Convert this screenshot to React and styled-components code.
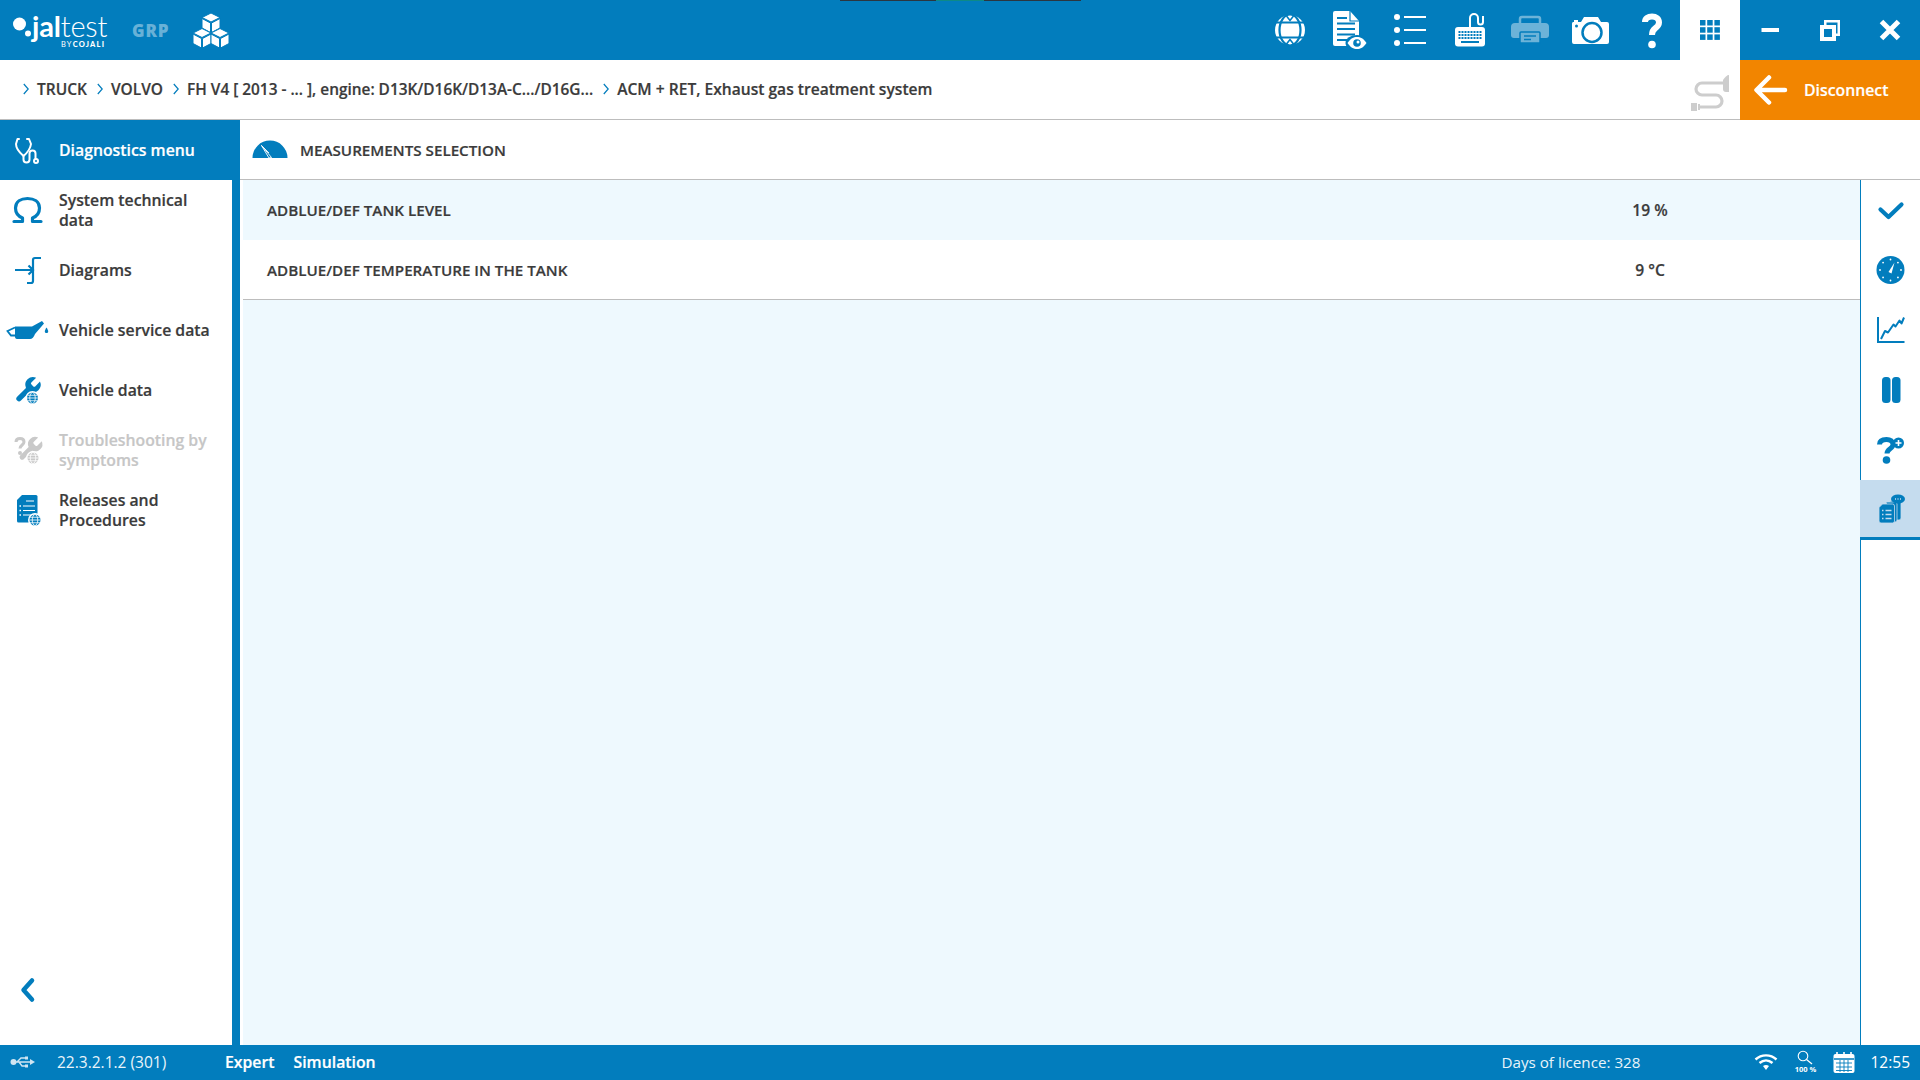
import React from "react";
import styled, { createGlobalStyle } from "styled-components";

const BLUE = "#027dbd";
const TEXT = "#3b3b3b";

const Global = createGlobalStyle`
  html, body { margin: 0; padding: 0; height: 100%; background: #fff; }
  #root { height: 100%; }
  * { box-sizing: border-box; }
  body { font-family: "Open Sans", "Liberation Sans", sans-serif; color: ${TEXT}; overflow: hidden; }
`;

const Page = styled.div`
  position: relative;
  width: 1920px;
  height: 1080px;
  display: flex;
  flex-direction: column;
`;
const TopStrip = styled.div`
  position: absolute;
  top: 0;
  left: 840px;
  width: 241px;
  height: 1px;
  background: linear-gradient(to right, #2b3640 0 96px, #0e8a86 96px 144px, #2b3640 144px);
`;
const Header = styled.header`
  height: 60px;
  flex: none;
  background: ${BLUE};
  display: flex;
  align-items: center;
`;
const Logo = styled.div`
  display: flex;
  align-items: flex-start;
  width: 132px;
  padding-left: 13px;
  color: #fff;
`;
const LogoText = styled.div`
  display: flex;
  flex-direction: column;
  align-items: flex-end;
`;
const Wordmark = styled.div`
  font-family: Lato, sans-serif;
  font-size: 29px;
  line-height: 29px;
  font-weight: 300;
  letter-spacing: -0.2px;
  height: 29px;
  b { font-weight: 700; }
`;
const Byline = styled.div`
  font-family: Lato, sans-serif;
  font-size: 7.5px;
  line-height: 9px;
  letter-spacing: 1.2px;
  font-weight: 400;
  margin-right: 2px;
  b { font-weight: 900; }
`;
const Grp = styled.div`
  width: 60px;
  font-size: 17px;
  font-weight: 800;
  letter-spacing: 0.8px;
  color: rgba(255, 255, 255, 0.42);
`;
const Spacer = styled.div`
  flex: 1;
`;
const IconCell = styled.div`
  width: 60px;
  height: 60px;
  flex: none;
  display: flex;
  align-items: center;
  justify-content: center;
  background: ${(p) => (p.$active ? "#fff" : "transparent")};
`;
const CrumbBar = styled.div`
  height: 60px;
  flex: none;
  display: flex;
  align-items: stretch;
  border-bottom: 1px solid #bdbdbd;
`;
const Crumbs = styled.nav`
  flex: 1;
  display: flex;
  align-items: center;
  padding: 0 0 1px 23px;
  font-weight: 600;
  -webkit-text-stroke: 0.2px currentColor;
  white-space: nowrap;
`;
const Crumb = styled.span`
  font-size: ${(p) => p.$size}px;
`;
const CrumbSep = styled.svg`
  width: 6px;
  height: 12px;
  margin-right: 8px;
  flex: none;
  &:not(:first-child) { margin-left: 10px; }
`;
const CableSlot = styled.div`
  width: 60px;
  display: flex;
  align-items: center;
  justify-content: center;
`;
const Disconnect = styled.button`
  width: 180px;
  margin-bottom: -1px;
  border: 0;
  padding: 0 0 0 8px;
  background: #f28500;
  color: #fff;
  display: flex;
  align-items: center;
  font: 600 15.8px "Open Sans", sans-serif;
  -webkit-text-stroke: 0.2px currentColor;
  gap: 12px;
`;
const Body = styled.div`
  flex: 1;
  display: flex;
  min-height: 0;
`;
const Sidebar = styled.aside`
  width: 240px;
  flex: none;
  display: flex;
  flex-direction: column;
  border-right: 8px solid ${BLUE};
  background: #fff;
`;
const NavRow = styled.div`
  height: 60px;
  flex: none;
  display: flex;
  align-items: center;
  width: ${(p) => (p.$active ? "240px" : "auto")};
  background: ${(p) => (p.$active ? BLUE : "transparent")};
  color: ${(p) => (p.$active ? "#fff" : p.$off ? "#c6c6c6" : TEXT)};
  font-size: 15.8px;
  line-height: 20px;
  font-weight: 600;
  -webkit-text-stroke: 0.2px currentColor;
  padding-left: 5px;
  svg { flex: none; margin-right: 10px; }
`;
const NavLabel = styled.span`
  max-width: ${(p) => (p.$wrap ? "150px" : "none")};
`;
const Collapse = styled.div`
  margin-top: auto;
  margin-bottom: 25px;
  height: 60px;
  padding-left: 5px;
  display: flex;
  align-items: center;
`;
const Main = styled.main`
  flex: 1;
  display: flex;
  flex-direction: column;
  min-width: 0;
`;
const TitleBar = styled.div`
  height: 60px;
  flex: none;
  display: flex;
  align-items: center;
  padding-left: 12px;
  gap: 12px;
  border-bottom: 1px solid #bdbdbd;
  font-size: 15.2px;
  font-weight: 600;
  -webkit-text-stroke: 0.2px currentColor;
`;
const Work = styled.div`
  flex: 1;
  display: flex;
  min-height: 0;
`;
const Table = styled.div`
  flex: 1;
  background: #eef9fe;
  border-left: 3px solid #fff;
  border-right: 1px solid ${BLUE};
  display: flex;
  flex-direction: column;
`;
const Row = styled.div`
  height: 60px;
  flex: none;
  display: grid;
  grid-template-columns: 1fr 420px;
  align-items: center;
  padding-left: 24px;
  font-size: 15.2px;
  font-weight: 600;
  -webkit-text-stroke: 0.2px currentColor;
  background: ${(p) => (p.$alt ? "#fff" : "#eef9fe")};
  border-bottom: ${(p) => (p.$alt ? "1px solid #bdbdbd" : "0")};
`;
const Value = styled.div`
  text-align: center;
  font-size: 15.6px;
`;
const Tools = styled.div`
  width: 59px;
  flex: none;
  display: flex;
  flex-direction: column;
`;
const Tool = styled.div`
  height: 60px;
  display: flex;
  align-items: center;
  justify-content: center;
  padding-right: ${(p) => (p.$active ? "0" : "1px")};
  margin-left: ${(p) => (p.$active ? "-1px" : "0")};
  background: ${(p) => (p.$active ? "#c5dcee" : "transparent")};
  border-bottom: ${(p) => (p.$active ? `3px solid ${BLUE}` : "0")};
`;
const Status = styled.footer`
  height: 35px;
  flex: none;
  background: ${BLUE};
  color: #fff;
  display: flex;
  align-items: center;
  font-size: 15.5px;
  padding: 0 10px 2px 0;
`;
const UsbSlot = styled.div`
  width: 57px;
  padding-left: 10px;
  display: flex;
  align-items: center;
`;
const Version = styled.div`
  width: 168px;
  color: #e9f4fa;
`;
const Mode = styled.div`
  font-size: 15.8px;
  font-weight: 600;
  -webkit-text-stroke: 0.2px currentColor;
  margin-right: 19px;
`;
const Days = styled.div`
  margin-left: auto;
  margin-right: 113px;
  font-size: 15.2px;
  color: #e9f4fa;
`;
const StatusIcon = styled.div`
  width: 26px;
  margin-right: ${(p) => p.$gap}px;
  display: flex;
  flex-direction: column;
  align-items: center;
`;
const ZoomLabel = styled.div`
  font-size: 7.5px;
  line-height: 8px;
  font-weight: 700;
  white-space: nowrap;
`;

const I = ({ children, s = 44, ...p }) => (
  <svg width={s} height={s} viewBox={`0 0 ${s} ${s}`} {...p}>{children}</svg>
);

const Globe = () => (
  <I>
    <circle cx="22" cy="22" r="15" fill="#fff" />
    <g fill="none" stroke={BLUE} strokeWidth="2.2">
      <ellipse cx="22" cy="22" rx="10.500" ry="15.500" />
      <path d="M7 14.500h30M7 29.500h30" />
      <path d="M18.500 8L22 12.500 25.500 8M18.500 36L22 31.500 25.500 36" strokeWidth="1.600" />
    </g>
  </I>
);
const DocEye = () => (
  <I>
    <path d="M5 5a2 2 0 0 1 2-2h15l9 10v25H7a2 2 0 0 1-2-2z" fill="#fff" />
    <path d="M22 3v10h9" fill="none" stroke={BLUE} strokeWidth="1.2" />
    <path d="M9 10h10M9 15.5h18M9 21h18M9 26.5h18M9 32h10" stroke={BLUE} strokeWidth="2" />
    <ellipse cx="29" cy="35" rx="11.5" ry="8" fill={BLUE} />
    <path d="M19.5 35c3-4.5 6-6 9.500-6s6.500 1.500 9.500 6c-3 4.500-6 6-9.500 6s-6.500-1.500-9.500-6z" fill="#fff" />
    <circle cx="29" cy="35" r="3.800" fill={BLUE} />
    <circle cx="30" cy="34" r="1.500" fill="#fff" />
  </I>
);
const ListIcon = () => (
  <I>
    <g fill="#fff">
      <circle cx="9" cy="9" r="3" />
      <circle cx="9" cy="22" r="3" />
      <circle cx="9" cy="35" r="3" />
    </g>
    <path d="M16 9h22M16 22h22M16 35h22" stroke="#fff" strokeWidth="2.200" />
  </I>
);
const keyDots = [];
for (let r = 0; r < 3; r++) for (let c = 0; c < 8; c++) keyDots.push([10.5 + c * 3, 23 + r * 3]);
const Keyboard = () => (
  <I>
    <path d="M22 21V10a4 4 0 0 1 8 0v4a2.500 2.500 0 0 0 5 0V8" fill="none" stroke="#fff" strokeWidth="2" />
    <rect x="7" y="19" width="30" height="19.500" rx="3" fill="#fff" />
    <g fill={BLUE}>
      {keyDots.map(([x, y]) => <rect key={`${x}-${y}`} x={x} y={y} width="2" height="2" />)}
      <rect x="13" y="33" width="18" height="2" />
    </g>
  </I>
);
const Printer = () => (
  <I>
    <g opacity=".42">
      <path d="M12 16V11a2 2 0 0 1 2-2h16a2 2 0 0 1 2 2v5" fill="none" stroke="#fff" strokeWidth="2.500" />
      <path d="M7 15h30a4 4 0 0 1 4 4v8a3 3 0 0 1-3 3H6a3 3 0 0 1-3-3v-8a4 4 0 0 1 4-4z" fill="#fff" />
      <rect x="12" y="24" width="20" height="11" rx="1" fill="#fff" stroke={BLUE} strokeWidth="1.500" />
      <path d="M16 28h12M16 31.500h7" stroke={BLUE} strokeWidth="1.500" />
    </g>
  </I>
);
const Camera = () => (
  <I>
    <path d="M5 14h1v-2h4v2h3l3-5h14l3 5h6a2 2 0 0 1 2 2v18a2 2 0 0 1-2 2H6a2 2 0 0 1-2-2V16a2 2 0 0 1 1-2z" fill="#fff" />
    <circle cx="24" cy="24.500" r="9.500" fill="#fff" stroke={BLUE} strokeWidth="2.500" />
    <circle cx="8.500" cy="18" r="1.500" fill={BLUE} />
  </I>
);
const Question = () => (
  <I>
    <path d="M17 14c0-3.500 3-5.500 7-5.500s7 2.200 7 6c0 3-2 4.500-4 6s-3 3-3 6.500" fill="none" stroke="#fff" strokeWidth="6" />
    <circle cx="24" cy="36.500" r="3.800" fill="#fff" />
  </I>
);
const GridIcon = () => (
  <I>
    <g fill={BLUE}>
      {[0, 1, 2].flatMap((r) => [0, 1, 2].map((c) => (
        <rect key={`${r}${c}`} x={12 + c * 7.200} y={12 + r * 7.200} width="5.500" height="5.500" />
      )))}
    </g>
  </I>
);
const Minus = () => (
  <I><rect x="13.500" y="20" width="17.500" height="4" fill="#fff" /></I>
);
const Restore = () => (
  <I>
    <path d="M16 12h16v16h-5v-2.500h2.500V14.500H18.500V17H16z" fill="#fff" />
    <rect x="14" y="19" width="12" height="12" fill="none" stroke="#fff" strokeWidth="4" />
  </I>
);
const Close = () => (
  <I><path d="M13.500 13.500l17 17M30.500 13.500l-17 17" stroke="#fff" strokeWidth="5" /></I>
);
const Cable = () => (
  <I>
    <path d="M36 15H14a6 6 0 0 0 0 12h14a6 6 0 0 1 0 12H12" fill="none" stroke="#cdcdcd" strokeWidth="3.200" />
    <path d="M41 7v17h-3c-2 0-3-1-3-3v-9c2-3 4-5 6-5z" fill="#cdcdcd" />
    <path d="M3 35h6v8H3zM10 36h2v6h-2z" fill="#cdcdcd" />
  </I>
);
const ArrowBack = () => (
  <I><path d="M9 22h28M21 9.500L8.500 22 21 34.500" fill="none" stroke="#fff" strokeWidth="4.500" strokeLinecap="round" strokeLinejoin="round" /></I>
);
const Steth = () => (
  <I>
    <g fill="none" stroke="#fff" strokeWidth="2" strokeLinecap="round" strokeLinejoin="round">
      <path d="M14 11h-1.500L11 16c0 4 4 9 7.500 12 3.500-3 7-8 7.500-12l-2-5h-2" />
      <path d="M18.500 28v3.500a3 3 0 0 0 6 0v-6a3 3 0 0 1 6 0V31" />
      <circle cx="31" cy="33" r="2" />
    </g>
  </I>
);
const Omega = () => (
  <I>
    <path d="M9 33.500h8.500V30C12.500 28 10.500 24 10.500 20 10.500 13.500 16 10.500 22.500 10.500S34.500 13.500 34.500 20c0 4-2 8-7 10v3.500H36" fill="none" stroke={BLUE} strokeWidth="3.200" strokeLinejoin="round" strokeLinecap="round" />
  </I>
);
const DiagramIcon = () => (
  <I>
    <path d="M36 10h-6a2 2 0 0 0-2 2v21a2 2 0 0 1-2 2h-4M10 22h18M23.500 17.500L28 22l-4.500 4.500" fill="none" stroke={BLUE} strokeWidth="2.200" />
  </I>
);
const OilCan = () => (
  <I>
    <path d="M10 18.500h17l10-5.500 2 2.500-9 10.500c-1 3-3 5-5 5H12c-1.500 0-2-1-2-2.500z" fill={BLUE} />
    <path d="M10 19.500L2.500 23l3.500 4.500h5" fill="none" stroke={BLUE} strokeWidth="1.800" />
    <path d="M41.500 19.500c-2 3-2.500 5.500 0 5.500s2-2.500 0-5.500z" fill={BLUE} />
  </I>
);
const MiniGlobe = ({ x, y, r = 5.5, c = BLUE }) => (
  <g>
    <circle cx={x} cy={y} r={r + 1.500} fill="#fff" />
    <circle cx={x} cy={y} r={r} fill={c} />
    <g fill="none" stroke="#fff" strokeWidth=".8">
      <ellipse cx={x} cy={y} rx={r * 0.5} ry={r} />
      <path d={`M${x - r} ${y}h${2 * r}M${x - r * 0.9} ${y - r * 0.5}h${1.800 * r}M${x - r * 0.9} ${y + r * 0.5}h${1.800 * r}`} />
    </g>
  </g>
);
const WRENCH = "M14.700 6.300a1 1 0 0 0 0 1.400l1.600 1.600a1 1 0 0 0 1.400 0l3.770-3.770a6 6 0 0 1-7.940 7.940l-6.910 6.910a2.120 2.120 0 0 1-3-3l6.910-6.910a6 6 0 0 1 7.940-7.940l-3.760 3.760z";
const WrenchGlobe = () => (
  <I>
    <path d={WRENCH} transform="translate(7.500 6.500) scale(1.280)" fill={BLUE} />
    <MiniGlobe x={27.500} y={30} />
  </I>
);
const WrenchAsk = () => (
  <I>
    <path d={WRENCH} transform="translate(11 6.500) scale(1.200)" fill="#c9c9c9" />
    <path d="M11 14c0-2 1.500-3.500 4-3.500s4 1.500 4 3.500c0 3-4 3-4 6.500" fill="none" stroke="#c9c9c9" strokeWidth="3" />
    <circle cx="15" cy="25" r="2" fill="#c9c9c9" />
    <MiniGlobe x={28} y={30} c="#c9c9c9" />
  </I>
);
const ReleaseDoc = () => (
  <I>
    <path d="M17 7h14a1.500 1.500 0 0 1 1.500 1.500V33a1.500 1.500 0 0 1-1.500 1.500H13.500A1.500 1.500 0 0 1 12 33V12z" fill={BLUE} />
    <path d="M21 13h8M18 18h12M18 22.500h12M18 27h9" stroke="#fff" strokeWidth="1.200" />
    <path d="M14.500 18h1.500M14.500 22.500h1.500M14.500 27h1.500" stroke="#fff" strokeWidth="1.500" />
    <MiniGlobe x={30} y={32} r={5.500} />
  </I>
);
const Chevron = () => (
  <I><path d="M27 12.500L18.500 22l8.500 9.500" fill="none" stroke={BLUE} strokeWidth="4.500" strokeLinecap="round" strokeLinejoin="round" /></I>
);
const Check = () => (
  <I><path d="M12.500 21.500l8 7.500L33.500 16.500" fill="none" stroke={BLUE} strokeWidth="4.200" strokeLinecap="round" strokeLinejoin="round" /></I>
);
const Clock = () => {
  const dots = [0, 45, 90, 135, 180, 225, 270, 315];
  return (
    <I>
      <circle cx="22.500" cy="22" r="14" fill={BLUE} />
      <g fill="#fff">
        {dots.map((a) => (
          <circle key={a} cx={22.500 + 10.500 * Math.sin((a * Math.PI) / 180)} cy={22 - 10.500 * Math.cos((a * Math.PI) / 180)} r=".9" />
        ))}
      </g>
      <path d="M20.500 24l6-9.500-3 11z" fill="#fff" />
    </I>
  );
};
const ChartIcon = () => (
  <I>
    <path d="M10 9v25h26.500" fill="none" stroke={BLUE} strokeWidth="2" />
    <path d="M13 31l4-8 3 1.500 5.500-8 2 2 4-6 2 3 2.500-6" fill="none" stroke={BLUE} strokeWidth="2" strokeLinejoin="round" />
  </I>
);
const Pause = () => (
  <I>
    <rect x="14" y="9" width="8.500" height="26" rx="3.500" fill={BLUE} />
    <rect x="24" y="9" width="8.500" height="26" rx="3.500" fill={BLUE} />
  </I>
);
const QuestionPlus = () => (
  <I>
    <path d="M11.500 16.500c0-3.500 3-5 7-5s6.500 1.800 6.500 5c0 4.500-6 4-6 9" fill="none" stroke={BLUE} strokeWidth="5" />
    <circle cx="18.500" cy="32" r="3.800" fill={BLUE} />
    <circle cx="30.500" cy="15" r="5.500" fill={BLUE} />
    <path d="M27.500 15h6M30.500 12v6" stroke="#fff" strokeWidth="1.600" />
  </I>
);
const NotesIcon = () => (
  <I>
    <path d="M22 14h9a2 2 0 0 1 2 2v15a2 2 0 0 1-2 2h-3z" fill={BLUE} stroke="#c5dcee" strokeWidth=".8" />
    <path d="M18 15h9a2 2 0 0 1 2 2v16a2 2 0 0 1-2 2h-4z" fill={BLUE} stroke="#c5dcee" strokeWidth=".8" />
    <path d="M14.500 17h10a2 2 0 0 1 2 2v15a2 2 0 0 1-2 2H13a2 2 0 0 1-2-2V20.500z" fill={BLUE} stroke="#c5dcee" strokeWidth=".8" />
    <path d="M14 23.500h1.500M14 27.500h1.500M14 31.500h1.500M17.500 23.500h6M17.500 27.500h6M17.500 31.500h6" stroke="#c5dcee" strokeWidth="1.300" />
    <ellipse cx="30" cy="12" rx="7" ry="4.500" fill={BLUE} />
    <path d="M27 12h1M29.500 12h1M32 12h1" stroke="#c5dcee" strokeWidth="1.300" />
  </I>
);
const Gauge = () => (
  <svg width="36" height="19" viewBox="0 0 36 19">
    <path d="M.5 18a17.500 17.500 0 0 1 35 0z" fill={BLUE} />
    <path d="M9.500 5.500L19.500 17.500 17 18z M9.500 5.500L17 13" fill="none" stroke="#fff" strokeWidth=".9" />
  </svg>
);
const Cubes = () => (
  <svg width="38" height="36" viewBox="0 0 38 36">
    <g fill="#fff" stroke={BLUE} strokeWidth="1">
      {[[19, 1], [10, 16.500], [28, 16.500]].map(([x, y]) => (
        <g key={`${x}${y}`}>
          <path d={`M${x} ${y}l9 4.500-9 4.500-9-4.500z`} />
          <path d={`M${x - 9} ${y + 5.500}l8.500 4.500v9.500l-8.500-4.500z`} />
          <path d={`M${x + 9} ${y + 5.500}l-8.500 4.500v9.500l8.500-4.500z`} />
        </g>
      ))}
    </g>
  </svg>
);
const LogoDot = () => (
  <svg width="19" height="30" viewBox="0 0 19 30" style={{ flex: "none" }}>
    <circle cx="6.500" cy="13" r="6.500" fill="#fff" />
    <circle cx="15" cy="22.500" r="3" fill="#fff" />
  </svg>
);
const Sep = () => (
  <CrumbSep viewBox="0 0 6 12">
    <path d="M.8 1L5.200 6 .8 11" fill="none" stroke={BLUE} strokeWidth="1.200" />
  </CrumbSep>
);
const Usb = () => (
  <svg width="26" height="16" viewBox="0 0 26 16">
    <g fill="none" stroke="#cfe5f2" strokeWidth="1.400">
      <path d="M3 8h19M7 8l4-4h4M9 8l3 4h3" />
    </g>
    <circle cx="3.500" cy="8" r="3" fill="#cfe5f2" />
    <path d="M20 5l5 3-5 3z" fill="#cfe5f2" />
    <rect x="15" y="2.500" width="3" height="3" fill="#cfe5f2" />
    <rect x="15" y="10.500" width="3" height="3" fill="#cfe5f2" />
  </svg>
);
const Wifi = () => (
  <svg width="24" height="18" viewBox="0 0 24 18">
    <g fill="none" stroke="#fff" strokeWidth="2.400">
      <path d="M1.500 6.500C7.500 1 16.500 1 22.500 6.500" />
      <path d="M5.500 10c4-3.500 9-3.500 13 0" />
    </g>
    <path d="M9 13c2-1.500 4-1.500 6 0l-3 4z" fill="#fff" />
  </svg>
);
const SearchSmall = () => (
  <svg width="16" height="15" viewBox="0 0 16 15">
    <circle cx="6" cy="6" r="4.800" fill="none" stroke="#fff" strokeWidth="1.100" />
    <path d="M9.500 9.500L15 14" stroke="#fff" strokeWidth="1.300" />
  </svg>
);
const Calendar = () => (
  <svg width="24" height="24" viewBox="0 0 24 24">
    <rect x="1.500" y="4" width="21" height="19" rx="2" fill="#fff" />
    <path d="M5 2v5M12 2v5M19 2v5" stroke="#fff" strokeWidth="1.600" />
    <path d="M2 9h20" stroke={BLUE} strokeWidth="1.500" />
    <path d="M4 13h16M4 17h16M4 20.500h16M8 10v12M12 10v12M16 10v12" stroke={BLUE} strokeWidth=".9" />
  </svg>
);

const nav = [
  { label: "System technical data", icon: <Omega />, wrap: true },
  { label: "Diagrams", icon: <DiagramIcon /> },
  { label: "Vehicle service data", icon: <OilCan /> },
  { label: "Vehicle data", icon: <WrenchGlobe /> },
  { label: "Troubleshooting by symptoms", icon: <WrenchAsk />, off: true },
  { label: "Releases and Procedures", icon: <ReleaseDoc /> },
];
const topIcons = [<Globe />, <DocEye />, <ListIcon />, <Keyboard />, <Printer />, <Camera />, <Question />];
const crumbs = [
  ["TRUCK", 15.5],
  ["VOLVO", 15.5],
  ["FH V4 [ 2013 - ... ], engine: D13K/D16K/D13A-C.../D16G...", 15.4],
  ["ACM + RET, Exhaust gas treatment system", 15.6],
];
const tools = [<Check />, <Clock />, <ChartIcon />, <Pause />, <QuestionPlus />];

export default function App() {
  return (
    <Page>
      <Global />
      <Header>
        <Logo>
          <LogoDot />
          <LogoText>
            <Wordmark><b>jal</b>test</Wordmark>
            <Byline>BY<b>COJALI</b></Byline>
          </LogoText>
        </Logo>
        <Grp>GRP</Grp>
        <Cubes />
        <Spacer />
        {topIcons.map((ic, i) => <IconCell key={i}>{ic}</IconCell>)}
        <IconCell $active><GridIcon /></IconCell>
        <IconCell><Minus /></IconCell>
        <IconCell><Restore /></IconCell>
        <IconCell><Close /></IconCell>
      </Header>
      <TopStrip />
      <CrumbBar>
        <Crumbs>
          {crumbs.map(([c, size]) => (
            <React.Fragment key={c}><Sep /><Crumb $size={size}>{c}</Crumb></React.Fragment>
          ))}
        </Crumbs>
        <CableSlot><Cable /></CableSlot>
        <Disconnect><ArrowBack />Disconnect</Disconnect>
      </CrumbBar>
      <Body>
        <Sidebar>
          <NavRow $active><Steth /><span>Diagnostics menu</span></NavRow>
          {nav.map((n) => (
            <NavRow key={n.label} $off={n.off}>{n.icon}<NavLabel $wrap={n.wrap}>{n.label}</NavLabel></NavRow>
          ))}
          <Collapse><Chevron /></Collapse>
        </Sidebar>
        <Main>
          <TitleBar><Gauge />MEASUREMENTS SELECTION</TitleBar>
          <Work>
            <Table>
              <Row><div>ADBLUE/DEF TANK LEVEL</div><Value>19 %</Value></Row>
              <Row $alt><div>ADBLUE/DEF TEMPERATURE IN THE TANK</div><Value>9 °C</Value></Row>
            </Table>
            <Tools>
              {tools.map((t, i) => <Tool key={i}>{t}</Tool>)}
              <Tool $active><NotesIcon /></Tool>
            </Tools>
          </Work>
        </Main>
      </Body>
      <Status>
        <UsbSlot><Usb /></UsbSlot>
        <Version>22.3.2.1.2 (301)</Version>
        <Mode>Expert</Mode>
        <Mode>Simulation</Mode>
        <Days>Days of licence: 328</Days>
        <StatusIcon $gap={13}><Wifi /></StatusIcon>
        <StatusIcon $gap={13}><SearchSmall /><ZoomLabel>100 %</ZoomLabel></StatusIcon>
        <StatusIcon $gap={13}><Calendar /></StatusIcon>
        <div>12:55</div>
      </Status>
    </Page>
  );
}
